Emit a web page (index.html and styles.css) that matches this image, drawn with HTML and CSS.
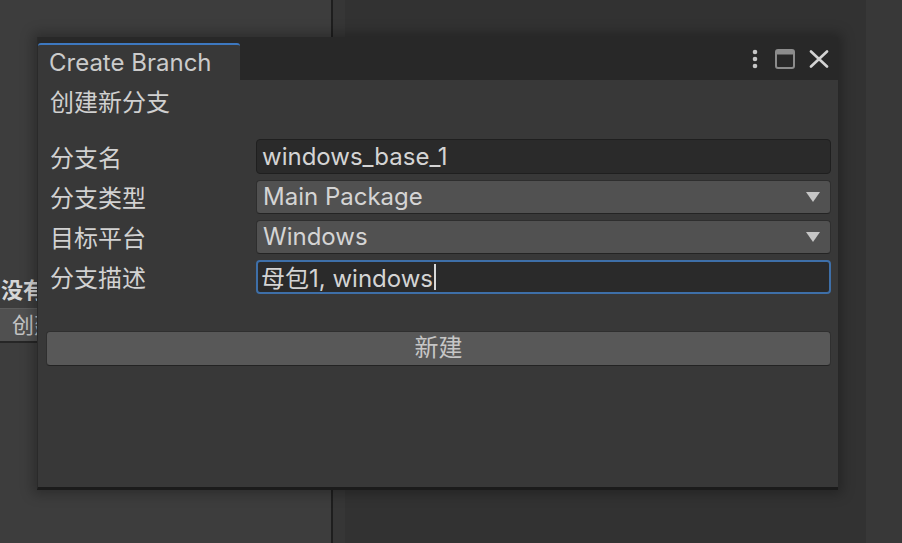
FILE: index.html
```html
<!DOCTYPE html>
<html>
<head>
<meta charset="utf-8">
<link rel="stylesheet" href="styles.css">
</head>
<body>
<div class="desk">
  <div class="panel-left">
    <div class="bg-label">没有分支</div>
    <div class="bg-btn">创建</div>
  </div>
  <div class="divider"></div>
  <div class="panel-mid"></div>
  <div class="panel-right"></div>
</div>

<div class="dialog">
  <div class="titlebar">
    <div class="tab">Create Branch</div>
    <div class="tools">
      <svg class="ico" width="12" height="22" viewBox="0 0 12 22"><circle cx="6" cy="4" r="2.3" fill="#c6c6c6"/><circle cx="6" cy="11" r="2.3" fill="#c6c6c6"/><circle cx="6" cy="18" r="2.3" fill="#c6c6c6"/></svg>
      <svg class="ico" width="20" height="20" viewBox="0 0 20 20"><rect x="1" y="1" width="18" height="18" rx="2" fill="none" stroke="#8c8c8c" stroke-width="2"/><rect x="1" y="1" width="18" height="4.5" rx="1.5" fill="#8c8c8c"/></svg>
      <svg class="ico" width="20" height="18" viewBox="0 0 20 18"><path d="M2 1.5 L18 16.5 M18 1.5 L2 16.5" stroke="#d4d4d4" stroke-width="2.6" stroke-linecap="round"/></svg>
    </div>
  </div>
  <div class="content">
    <div class="heading">创建新分支</div>
    <div class="form">
      <div class="row">
        <div class="label">分支名</div>
        <div class="field text">windows_base_1</div>
      </div>
      <div class="row">
        <div class="label">分支类型</div>
        <div class="field select"><span>Main Package</span><span class="arrow"></span></div>
      </div>
      <div class="row">
        <div class="label">目标平台</div>
        <div class="field select"><span>Windows</span><span class="arrow"></span></div>
      </div>
      <div class="row">
        <div class="label">分支描述</div>
        <div class="field text focus"><span>母包1, windows</span><span class="caret"></span></div>
      </div>
    </div>
    <div class="btn">新建</div>
  </div>
</div>
</body>
</html>
```

FILE: styles.css
```css
* { box-sizing: border-box; }
html, body { margin: 0; padding: 0; }
body {
  width: 902px;
  height: 543px;
  overflow: hidden;
  position: relative;
  font-family: Inter, "Noto Sans CJK SC", sans-serif;
  background: #333333;
}
.desk {
  display: flex;
  height: 543px;
}
.panel-left {
  width: 331px;
  background: #3d3d3d;
  padding-top: 277px;
  overflow: hidden;
}
.bg-label {
  width: 37px;
  overflow: hidden;
  font-weight: 700;
  font-size: 22px;
  line-height: 26px;
  color: #d6d6d6;
  padding-left: 1px;
  white-space: nowrap;
}
.bg-btn {
  margin-top: 5px;
  height: 35px;
  width: 37px;
  overflow: hidden;
  white-space: nowrap;
  background: #505050;
  border-top: 1px solid #5c5c5c;
  border-bottom: 2px solid #262626;
  color: #c4c4c4;
  font-size: 22px;
  line-height: 32px;
  padding-left: 12px;
}
.divider { width: 2px; background: #1e1e1e; }
.panel-mid {
  flex: 1;
  background: linear-gradient(to right, #363636 0, #363636 12px, #323232 12px);
}
.panel-right { width: 36px; background: #383838; }

.dialog {
  position: absolute;
  left: 37px;
  top: 37px;
  width: 801px;
  height: 453px;
  background: #383838;
  border-left: 1px solid #2a2a2a;
  border-bottom: 3px solid #1b1b1b;
  box-shadow: 0 0 12px 4px rgba(0,0,0,0.28);
  display: flex;
  flex-direction: column;
}
.titlebar {
  height: 43px;
  background: #282828;
  display: flex;
  align-items: flex-end;
  justify-content: space-between;
}
.tab {
  width: 202px;
  height: 37px;
  background: #383838;
  border-top: 2px solid #3d78c0;
  border-radius: 3px 3px 0 0;
  color: #cbcbcb;
  font-size: 24px;
  line-height: 36px;
  padding-left: 11px;
}
.tools {
  align-self: center;
  display: flex;
  align-items: center;
  gap: 14px;
  padding-right: 9px;
}
.ico { display: block; }
.content {
  flex: 1;
  padding: 7px 7px 0 8px;
  display: flex;
  flex-direction: column;
}
.heading {
  color: #d0d0d0;
  font-size: 24px;
  line-height: 32px;
  padding-left: 4px;
}
.form {
  margin-top: 20px;
  display: flex;
  flex-direction: column;
  gap: 5px;
}
.row {
  display: flex;
  align-items: center;
  height: 35px;
}
.label {
  width: 210px;
  padding-left: 4px;
  color: #d2d2d2;
  font-size: 24px;
}
.field {
  flex: 1;
  height: 34px;
  border-radius: 4px;
  font-size: 24px;
  color: #d4d4d4;
  display: flex;
  align-items: center;
  padding-left: 5px;
  white-space: nowrap;
}
.field.text {
  background: #2a2a2a;
  border: 1px solid #1f1f1f;
}
.row:first-child .field { height: 35px; }
.field.focus {
  border: 2px solid #3e6fa8;
  padding-left: 3px;
}
.field.select {
  background: #515151;
  border: 1px solid #2e2e2e;
  border-bottom-color: #242424;
  justify-content: space-between;
  padding-left: 6px;
  padding-right: 10px;
}
.arrow {
  width: 0; height: 0;
  border-left: 7px solid transparent;
  border-right: 7px solid transparent;
  border-top: 10px solid #c6c6c6;
}
.caret {
  width: 2px;
  height: 26px;
  background: #d8d8d8;
  margin-left: 1px;
}
.btn {
  margin-top: 37px;
  height: 35px;
  background: #585858;
  border: 1px solid #2f2f2f;
  border-bottom-color: #232323;
  border-radius: 4px;
  color: #c6c6c6;
  font-size: 24px;
  text-align: center;
  line-height: 32px;
}
```
